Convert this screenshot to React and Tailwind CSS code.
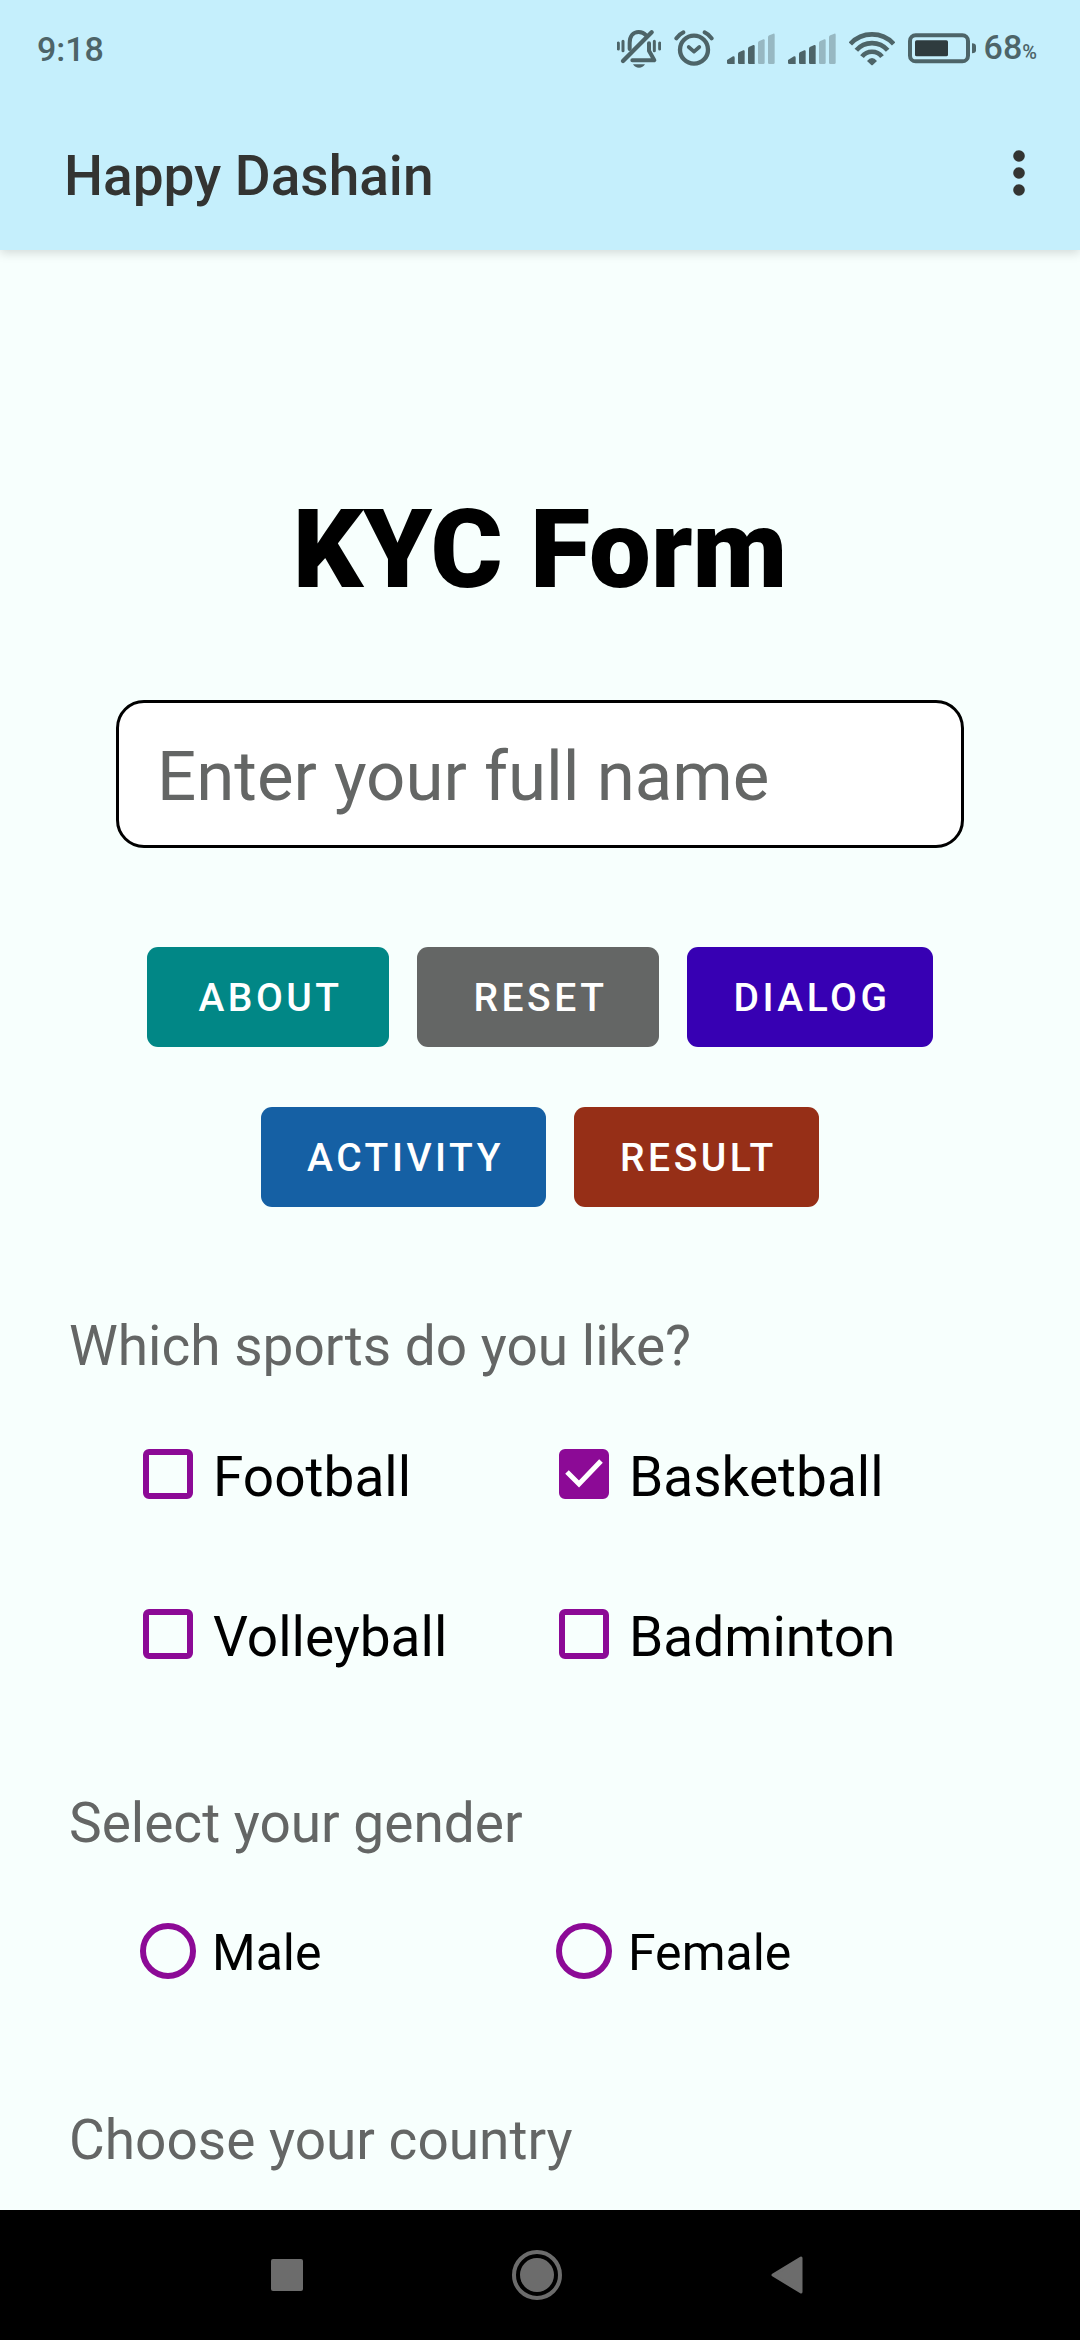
import { useState } from "react";

function BellOffIcon() {
  return (
    <svg viewBox="42 56 132 120" className="h-10 w-11" fill="none" stroke="#4d6468" strokeLinecap="round" strokeLinejoin="round" aria-hidden="true">
      <path d="M80 116V98C80 77 91 65 107 65C117 65 124 69 129 75" strokeWidth="12" />
      <path d="M60 152L146 66" strokeWidth="13" />
      <path d="M138 99V121L154 150H88" strokeWidth="12" />
      <path d="M90 162H126C122 169 116 172 108 172S94 169 90 162Z" fill="#4d6468" stroke="none" />
      <path d="M46 98V116M60 93V121M154 93V121M170 98V116" strokeWidth="9" />
    </svg>
  );
}

function AlarmIcon() {
  return (
    <svg viewBox="218 56 120 120" className="size-10" fill="none" stroke="#4d6468" strokeLinecap="round" strokeLinejoin="round" aria-hidden="true">
      <circle cx="278" cy="118" r="42" strokeWidth="13" />
      <path d="M225 84C230 76 237 70 246 66M310 66C319 70 326 76 331 84" strokeWidth="12" />
      <path d="M262 110L278 124L294 110" strokeWidth="11" />
    </svg>
  );
}

function SignalIcon() {
  return (
    <svg viewBox="375 56 144 120" className="h-10 w-12" aria-hidden="true">
      <g fill="#4d6468">
        <path d="M375 149L393 138Q398 137 398 142V161H379Q375 161 375 157Z" />
        <path d="M408 131Q408 127 412 125L424 120Q428 119 428 123V161H412Q408 161 408 157Z" />
        <path d="M438 115Q438 111 442 109L454 104Q458 103 458 107V161H442Q438 161 438 157Z" />
      </g>
      <g fill="#97b8c2">
        <path d="M468 98Q468 94 472 92L484 87Q488 86 488 90V157Q488 161 484 161H472Q468 161 468 157Z" />
        <path d="M498 81Q498 77 502 75L514 70Q518 69 518 73V157Q518 161 514 161H502Q498 161 498 157Z" />
      </g>
    </svg>
  );
}

function WifiIcon() {
  return (
    <svg viewBox="738 56 138 120" className="h-10 w-[46px]" fill="none" stroke="#4d6468" strokeWidth="14" aria-hidden="true">
      <path d="M742 101A88 88 0 0 1 872 101" />
      <path d="M760 120A62 62 0 0 1 854 120" />
      <path d="M777 139A38 38 0 0 1 837 139" />
      <path d="M792 152Q807 134 822 152L810 163Q807 166 804 163Z" fill="#4d6468" stroke="none" />
    </svg>
  );
}

function BatteryIcon() {
  return (
    <svg viewBox="921 56 204 120" className="h-10 w-17" fill="none" aria-hidden="true">
      <rect x="927" y="75" width="174" height="78" rx="17" stroke="#4d6468" strokeWidth="12" />
      <rect x="942" y="90" width="99" height="48" rx="5" fill="#2f3b3e" />
      <path d="M1113 99Q1125 99 1125 108V120Q1125 129 1113 129Z" fill="#4d6468" />
    </svg>
  );
}

function StatusBar() {
  return (
    <div className="flex h-24 items-center justify-between pt-0.5 pr-[43px] pl-[37px] text-[34px] leading-10 font-medium text-[#4d6468]">
      <span>9:18</span>
      <div className="flex items-center gap-[13px]">
        <BellOffIcon />
        <AlarmIcon />
        <SignalIcon />
        <SignalIcon />
        <WifiIcon />
        <div className="flex items-center gap-2">
          <BatteryIcon />
          <span>
            68<span className="text-[20px]">%</span>
          </span>
        </div>
      </div>
    </div>
  );
}

function ActionButton({ className, children }) {
  return (
    <button
      type="button"
      className={`h-[100px] min-w-[242px] rounded-[11px] pt-0.5 pr-[42px] pl-[46px] text-[39px] font-medium tracking-[0.09em] text-white uppercase ${className}`}
    >
      {children}
    </button>
  );
}

function SportOption({ name, checked, onChange }) {
  return (
    <label className="flex h-20 items-center gap-5 text-[55px] text-black">
      <span className="grid size-[50px] shrink-0">
        <input
          type="checkbox"
          checked={checked}
          onChange={onChange}
          className="col-start-1 row-start-1 size-[50px] appearance-none rounded-md border-6 border-[#8c0a96] checked:bg-[#8c0a96]"
        />
        {checked && (
          <svg viewBox="0 0 50 50" className="pointer-events-none col-start-1 row-start-1" fill="none" stroke="#fff" strokeWidth="5" aria-hidden="true">
            <path d="M8 23L20 35L42 12" />
          </svg>
        )}
      </span>
      <span className="pt-1.5">{name}</span>
    </label>
  );
}

function GenderOption({ name, checked, onChange }) {
  return (
    <label className="flex h-20 items-center gap-4 text-[50px] text-black">
      <input
        type="radio"
        name="gender"
        checked={checked}
        onChange={onChange}
        className="size-14 shrink-0 appearance-none rounded-full border-6 border-[#8c0a96] checked:bg-[radial-gradient(circle,#8c0a96_50%,transparent_52%)]"
      />
      <span className="pt-1">{name}</span>
    </label>
  );
}

const SPORTS = ["Football", "Basketball", "Volleyball", "Badminton"];
const GENDERS = ["Male", "Female"];

export default function App() {
  const [sports, setSports] = useState(["Basketball"]);
  const [gender, setGender] = useState("");
  const [fullName, setFullName] = useState("");

  const toggleSport = (name) =>
    setSports((list) => (list.includes(name) ? list.filter((s) => s !== name) : [...list, name]));

  return (
    <div className="flex min-h-screen flex-col bg-[#f7fffd] font-[Roboto,sans-serif]">
      <header className="bg-[#c5effc] shadow-[0_3px_10px_rgba(0,0,0,0.15)]">
        <StatusBar />
        <div className="flex h-[154px] items-center justify-between pr-9 pl-16">
          <h1 className="pt-1.5 text-[55px] font-medium text-[#333432]">Happy Dashain</h1>
          <button type="button" aria-label="More options" className="flex w-[50px] justify-center">
            <svg viewBox="0 0 12 46" className="h-[46px] w-3" fill="#333432" aria-hidden="true">
              <circle cx="6" cy="6" r="5.800" />
              <circle cx="6" cy="23" r="5.800" />
              <circle cx="6" cy="40" r="5.800" />
            </svg>
          </button>
        </div>
      </header>

      <main className="px-[69px]">
        <h2 className="pt-[236px] text-center text-[110px] leading-[128px] font-black text-black">KYC Form</h2>

        <form onSubmit={(e) => e.preventDefault()}>
          <div className="mt-[86px] px-[47px]">
            <input
              type="text"
              aria-label="Full name"
              placeholder="Enter your full name"
              value={fullName}
              onChange={(e) => setFullName(e.target.value)}
              className="h-[148px] w-full rounded-[28px] border-3 border-black bg-white px-[38px] pt-1 text-[69px] text-black placeholder:text-[#646665]"
            />
          </div>

          <div className="mt-[99px] flex justify-center gap-7">
            <ActionButton className="bg-[#018786]">About</ActionButton>
            <ActionButton className="bg-[#646665]">Reset</ActionButton>
            <ActionButton className="bg-[#3700b3]">Dialog</ActionButton>
          </div>
          <div className="mt-[60px] flex justify-center gap-7">
            <ActionButton className="bg-[#1560a4]">Activity</ActionButton>
            <ActionButton className="bg-[#962f17]">Result</ActionButton>
          </div>

          <fieldset className="mt-[107px]">
            <legend className="text-[55px] leading-16 text-[#646665]">Which sports do you like?</legend>
            <div className="mt-14 grid grid-cols-[416px_1fr] gap-y-20 pl-[74px]">
              {SPORTS.map((name) => (
                <SportOption key={name} name={name} checked={sports.includes(name)} onChange={() => toggleSport(name)} />
              ))}
            </div>
          </fieldset>

          <fieldset className="mt-[117px]">
            <legend className="text-[55px] leading-16 text-[#646665]">Select your gender</legend>
            <div className="mt-14 grid grid-cols-[416px_1fr] pl-[71px]">
              {GENDERS.map((name) => (
                <GenderOption key={name} name={name} checked={gender === name} onChange={() => setGender(name)} />
              ))}
            </div>
          </fieldset>

          <p className="mt-[117px] text-[55px] leading-16 text-[#646665]">Choose your country</p>
        </form>
      </main>

      <nav className="mt-auto flex h-[130px] items-center justify-center gap-[200px] bg-black pr-1.5">
        <button type="button" aria-label="Recent apps" className="flex size-[50px] items-center justify-center">
          <span className="size-8 rounded-xs bg-[#6c6c6c]" />
        </button>
        <button type="button" aria-label="Home" className="flex size-[50px] items-center justify-center rounded-full border-4 border-[#6c6c6c]">
          <span className="size-[34px] rounded-full bg-[#6c6c6c]" />
        </button>
        <button type="button" aria-label="Back" className="flex size-[50px] items-center justify-center">
          <svg viewBox="0 0 32 38" className="h-[38px] w-8" fill="#6c6c6c" stroke="#6c6c6c" strokeWidth="3" strokeLinejoin="round" aria-hidden="true">
            <path d="M2 19L30 2V36Z" />
          </svg>
        </button>
      </nav>
    </div>
  );
}
